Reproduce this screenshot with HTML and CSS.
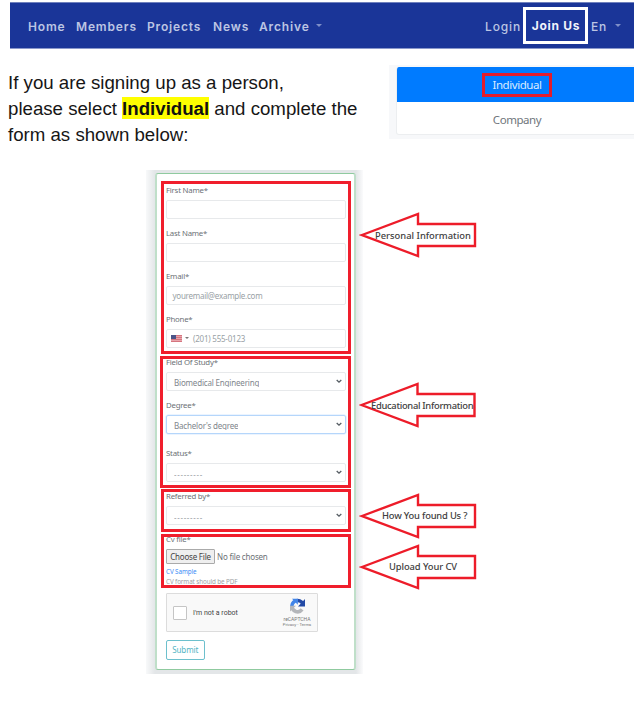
FILE: index.html
```html
<!DOCTYPE html>
<html lang="en">
<head>
<meta charset="utf-8">
<title>Join Us guide</title>
<link rel="stylesheet" href="styles.css">
</head>
<body>
<nav class="navbar">
  <span class="home">Home</span><span class="members">Members</span><span class="projects">Projects</span><span class="news">News</span><span class="archive">Archive</span><i class="caret"></i>
  <span class="login">Login</span><span class="join">Join Us</span><span class="lang">En</span><i class="caret end"></i>
</nav>
<section class="intro">
  <p class="lead">If you are signing up as a person,<br>please select <mark>Individual</mark> and complete the<br>form as shown below:</p>
  <div class="tabs">
    <div class="tablist">
      <div class="tab active"><span class="marked">Individual</span></div>
      <div class="tab"><span>Company</span></div>
    </div>
  </div>
</section>
<main class="guide">
  <div class="backdrop">
    <form class="card">
      <div class="group personal">
        <div class="field"><label>First Name*</label><div class="input"></div></div>
        <div class="field"><label>Last Name*</label><div class="input"></div></div>
        <div class="field"><label>Email*</label><div class="input"><span class="mail">youremail@example.com</span></div></div>
        <div class="field"><label>Phone*</label><div class="input phone">
          <svg class="flag" width="11" height="7" viewBox="0 0 11 7"><path fill="#e8a6ad" d="M0 0h11v7H0z"/><path stroke="#cf6874" stroke-width=".8" d="M0 .5h11M0 2.5h11M0 4.5h11M0 6.5h11"/><path fill="#4a5488" d="M0 0h5v4H0z"/></svg>
          <i class="minicaret"></i><span class="tel">(201) 555-0123</span></div></div>
      </div>
      <div class="group education">
        <div class="field"><label>Field Of Study*</label><div class="input select"><span class="clip bio">Biomedical Engineering</span><svg class="chev" width="6" height="5" viewBox="0 0 6 5"><path d="M.7 1 3 3.2 5.3 1"/></svg></div></div>
        <div class="field degree"><label>Degree*</label><div class="input select focus"><span class="clip bach">Bachelor's degree</span><svg class="chev" width="6" height="5" viewBox="0 0 6 5"><path d="M.7 1 3 3.2 5.3 1"/></svg></div></div>
        <div class="field"><label>Status*</label><div class="input select"><span class="clip dash">---------</span><svg class="chev" width="6" height="5" viewBox="0 0 6 5"><path d="M.7 1 3 3.2 5.3 1"/></svg></div></div>
      </div>
      <div class="group referral">
        <div class="field"><label>Referred by*</label><div class="input select"><span class="clip dash">---------</span><svg class="chev" width="6" height="5" viewBox="0 0 6 5"><path d="M.7 1 3 3.2 5.3 1"/></svg></div></div>
      </div>
      <div class="group cv">
        <label>Cv file*</label>
        <div class="file"><span class="choose">Choose File</span><span class="nofile">No file chosen</span></div>
        <div class="sample">CV Sample</div>
        <div class="hint">CV format should be PDF</div>
      </div>
      <div class="captcha">
        <i class="check"></i><span class="robot">I'm not a robot</span>
        <div class="brand">
          <svg width="17" height="16" viewBox="0 0 17 16" fill="none" stroke-width="3.6"><path stroke="#4285e8" d="M2.800 8.200A5.700 5.700 0 0 1 8.500 2.500"/><path stroke="#234aa6" d="M8.500 2.500A5.700 5.700 0 0 1 14.200 8"/><path fill="#234aa6" d="M16 1v7.500H9z"/><path fill="#4285e8" d="M3 .7h5.800v6z"/><path stroke="#b4b6ba" d="M2.800 8a5.700 5.700 0 0 0 10.300 3.400"/><path fill="#b4b6ba" d="M1 13.500V7.800h6z"/></svg>
          <span class="rc">reCAPTCHA</span><span class="pt">Privacy - Terms</span>
        </div>
      </div>
      <span class="submit">Submit</span>
    </form>
  </div>
  <aside class="arrows">
    <div class="arrow a1"><svg width="118" height="46" viewBox="0 0 118 46"><path d="M3 23 59 2v10h57v22H59v10z"/></svg><span>Personal Information</span></div>
    <div class="arrow a2"><svg width="118" height="46" viewBox="0 0 118 46"><path d="M2.500 23 58.500 2v10h57v22h-57v10z"/></svg><span>Educational Information</span></div>
    <div class="arrow a3"><svg width="118" height="46" viewBox="0 0 118 46"><path d="M3 23 59 2v10h57v22H59v10z"/></svg><span>How You found Us ?</span></div>
    <div class="arrow a4"><svg width="118" height="46" viewBox="0 0 118 46"><path d="M3 23 59 2v10h57v22H59v10z"/></svg><span>Upload Your CV</span></div>
  </aside>
</main>
</body>
</html>
```

FILE: styles.css
```css
* { box-sizing: border-box; }
body { margin: 0; width: 634px; height: 706px; background: #fff; overflow: hidden; font-family: "Noto Sans", sans-serif; }

.navbar { margin: 2px 0 0 10px; height: 47px; background: #1a3598; border-top: 1px solid #6f80bd; border-bottom: 1px solid #8a98cb; display: flex; align-items: center; padding-left: 18px; color: #bcc5e3; font: 600 12px Inter, sans-serif; letter-spacing: .85px; white-space: nowrap; }
.navbar span { flex: none; padding-top: 1px; }
.navbar .home { width: 48px; }
.navbar .members { width: 71px; }
.navbar .projects { width: 66px; }
.navbar .news { width: 46px; }
.navbar .archive { width: 57px; }
.caret { border: 3px solid transparent; border-top: 3px solid #7f8fc8; border-bottom: 0; }
.navbar .login { width: 38px; margin-left: 163px; font-weight: 500; }
.navbar .join { width: 65px; height: 37px; border: 3px solid #fff; text-align: center; line-height: 31px; padding-top: 0; padding-left: 1px; color: #f0f3fb; font-weight: 700; letter-spacing: .7px; }
.navbar .lang { width: 27px; padding-left: 3px; font-weight: 500; }

.intro { display: flex; justify-content: space-between; height: 121px; }
.lead { margin: 21px 0 0 8px; width: 370px; font: 18.670px/26px "Liberation Sans", sans-serif; color: #161616; white-space: nowrap; }
mark { background: #ff0; color: #111; font-weight: bold; padding: 1px 0 0; }
.tabs { flex: none; width: 245px; height: 74px; margin-top: 16px; background: #f7f8fa; padding: 2px 0 0 7px; overflow: hidden; }
.tablist { width: 242px; height: 68px; background: #fff; border: 1px solid #eceef0; border-top: 0; border-radius: 3px; overflow: hidden; }
.tab { height: 34px; display: flex; align-items: center; justify-content: center; font-size: 11.5px; letter-spacing: -.45px; color: #70767c; }
.tab.active { height: 35px; background: #007bff; color: #d9ebff; }
.marked { border: 3px solid #e31c2b; width: 70px; height: 24px; line-height: 18px; text-align: center; }

.guide { display: flex; padding-left: 146px; }
.backdrop { width: 217px; height: 504px; padding: 3px 0 0 9px; background: linear-gradient(90deg, #f8f9fa, #e3e6e8 9px, #e3e6e8 210px, #fbfbfc 217px); }
.card { isolation: isolate; width: 201px; height: 497px; border: 1px solid #8fca9f; border-right: 2px solid #bfdfc9; border-left: 2px solid #bfdfc9; border-radius: 3px; background: #fff; padding: 7px 0 0 4px; font-size: 7.8px; letter-spacing: -.22px; color: #6c7176; white-space: nowrap; }
.group { width: 190px; border: 3px solid #f01e2c; padding: 0 3px 0 2px; margin-bottom: 2px; }
.personal { height: 173px; }
.education { width: 191px; height: 132px; margin-left: -1px; margin-bottom: 1px; padding-left: 3px; }
.referral { height: 43px; }
.cv { height: 54px; margin-bottom: 5px; }
label { display: block; height: 12px; line-height: 12px; position: relative; z-index: -1; }
.field { height: 43px; }
.personal .field:last-child { height: 40px; }
.education .field:first-child { margin-top: -3px; height: 43px; }
.education .degree { height: 48px; }
.referral .field { margin-top: -2px; }
.cv label { margin-top: -4px; }
.input { width: 179.500px; height: 19.500px; margin-top: 3.500px; border: 1px solid #e7e9eb; border-radius: 2px; display: flex; align-items: center; padding-left: 5.500px; color: #999fa5; }
.input .mail { font-size: 8px; letter-spacing: -.25px; }
.phone { padding-left: 4px; }
.minicaret { margin-left: 3px; border: 2px solid transparent; border-top: 2px solid #777; border-bottom: 0; }
.tel { margin-left: 4px; font-size: 8px; }
.select { padding: 2px 3px 0 7px; justify-content: space-between; color: #80868c; }
.clip { height: 9px; line-height: 10px; overflow: hidden; }
.bio, .bach { font-size: 8px; letter-spacing: -.18px; }
.dash { letter-spacing: .7px; }
.focus { border-color: #b5d6fb; box-shadow: 0 0 0 .5px #d8eaff; }
.chev { fill: none; stroke: #555c63; stroke-width: 1.3; margin-top: -1px; }
.file { display: flex; align-items: center; margin-top: 4px; height: 15px; font-size: 8px; letter-spacing: -.2px; }
.choose { width: 49px; height: 15px; line-height: 13px; text-align: center; background: #efefef; border: 1px solid #aaa; border-radius: 1px; color: #444; }
.nofile { margin-left: 2px; }
.sample, .hint { font-size: 6.300px; letter-spacing: -.1px; line-height: 9.500px; color: #3d8cf6; }
.sample { margin-top: 3px; }
.hint { color: #9da1a5; }
.captcha { width: 152px; height: 39px; margin-left: 5px; background: #f9f9f9; border: 1px solid #dcdcdc; border-radius: 1px; display: flex; align-items: center; padding-left: 6px; letter-spacing: 0; }
.check { width: 14px; height: 14px; border: 1px solid #c5c5c5; background: #fff; border-radius: 1px; }
.robot { margin-left: 6px; width: 88px; font: 7px Roboto, sans-serif; color: #444; }
.brand { display: flex; flex-direction: column; align-items: center; width: 32px; padding-top: 1px; color: #777; }
.rc { font: 5px/6px Roboto, sans-serif; margin-top: 2px; }
.pt { font: 4.200px/6px Roboto, sans-serif; }
.submit { display: block; width: 38.500px; height: 19.500px; margin: 8px 0 0 5px; border: 1px solid #6dc0cd; border-radius: 2px; text-align: center; line-height: 18px; font-size: 8px; letter-spacing: -.1px; color: #53b4c4; }

.arrows { width: 118px; margin-left: -4px; }
.arrow { display: grid; height: 46px; width: 118px; align-items: center; white-space: nowrap; font: 500 9.400px "Noto Sans", sans-serif; color: #404040; }
.arrow svg, .arrow span { grid-area: 1 / 1; }
.arrow path { fill: #fff; fill-opacity: .6; stroke: #ed1c29; stroke-width: 2.400; }
.a1 { margin-top: 42px; }
.a2 { margin-top: 124px; }
.a3 { margin-top: 64.500px; }
.a4 { margin-top: 5px; }
.a1 span { margin-left: 16px; }
.a2 span { margin-left: 12px; letter-spacing: -.3px; }
.a3 span { margin-left: 23px; letter-spacing: -.2px; }
.a4 span { margin-left: 30px; letter-spacing: -.1px; }
```
